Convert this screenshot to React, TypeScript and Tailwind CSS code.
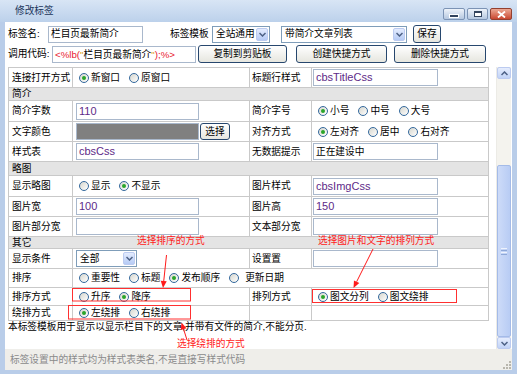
import React from 'react';

type Kids = { children?: React.ReactNode };

function Radio({ on }: { on?: boolean }) {
  return (
    <span className="flex h-[10px] w-[10px] shrink-0 items-center justify-center rounded-full border border-[#33689c] bg-linear-to-br from-[#d6d6ce] to-[#ffffff]">
      {on && <span className="h-[4px] w-[4px] rounded-full bg-[#2aa52a]" />}
    </span>
  );
}

function Opt({ on, label }: { on?: boolean; label: string }) {
  return (
    <span className="flex items-center gap-[2px] whitespace-nowrap">
      <Radio on={on} />
      <span>{label}</span>
    </span>
  );
}

function Chevron({ up }: { up?: boolean }) {
  return (
    <svg width="7" height="5" viewBox="0 0 7 5">
      <path d={up ? 'M0.5 4 L3.5 1 L6.5 4' : 'M0.5 1 L3.5 4 L6.5 1'} fill="none" stroke="#4d6185" strokeWidth="1.5" />
    </svg>
  );
}

function Field({ v, w, latin }: { v?: string; w: string; latin?: boolean }) {
  return (
    <div
      className={`flex h-[17px] shrink-0 items-center whitespace-nowrap border border-[#a9b8cc] bg-white pl-[2px] ${w} ${
        latin ? 'text-[11px] text-[#5e2a88]' : ''
      }`}
    >
      {v}
    </div>
  );
}

function Select({ v, w }: { v: string; w: string }) {
  return (
    <div className={`flex h-[17px] shrink-0 items-center border border-[#7f9db9] bg-white ${w}`}>
      <span className="flex-1 whitespace-nowrap pl-[3px]">{v}</span>
      <span className="mr-[1px] flex h-[13px] w-[12px] items-center justify-center rounded-[2px] border border-[#bccbf0] bg-linear-to-b from-[#e4ecfe] to-[#b6cbf5]">
        <Chevron />
      </span>
    </div>
  );
}

function Btn({ children, w, h = 'h-[18px]' }: Kids & { w: string; h?: string }) {
  return (
    <div
      className={`flex shrink-0 items-center justify-center whitespace-nowrap rounded-[3px] border border-[#27476e] bg-linear-to-b from-[#ffffff] to-[#e6e6df] ${w} ${h}`}
    >
      {children}
    </div>
  );
}

function Row({ h, children }: Kids & { h: string }) {
  return <div className={`flex border-b border-[#c9c9c9] ${h}`}>{children}</div>;
}

function Head({ h, children }: Kids & { h: string }) {
  return <div className={`flex items-center border-b border-[#c9c9c9] bg-[#e4e4e4] pl-[3px] ${h}`}>{children}</div>;
}

function C1({ children }: Kids) {
  return <div className="flex w-[64px] shrink-0 items-center whitespace-nowrap border-r border-[#c9c9c9] pl-[3px]">{children}</div>;
}
function C2({ children }: Kids) {
  return <div className="flex w-[177px] shrink-0 items-center border-r border-[#c9c9c9] pl-[3px]">{children}</div>;
}
function C3({ children }: Kids) {
  return <div className="flex w-[62px] shrink-0 items-center whitespace-nowrap border-r border-[#c9c9c9] pl-[2px]">{children}</div>;
}
function C4({ children }: Kids) {
  return <div className="flex w-[176px] shrink-0 items-center pl-[1px]">{children}</div>;
}

function Group({ children }: Kids) {
  return <div className="flex items-center gap-[9px] pl-[3px]">{children}</div>;
}
function Group4({ children }: Kids) {
  return <div className="flex items-center gap-[9px] pl-[5px]">{children}</div>;
}

function Arrow({ x1, y1, x2, y2 }: { x1: number; y1: number; x2: number; y2: number }) {
  const a = Math.atan2(y2 - y1, x2 - x1);
  const l = 7;
  const s = 3;
  const bx = x2 - l * Math.cos(a);
  const by = y2 - l * Math.sin(a);
  const p = `${x2},${y2} ${bx + s * Math.sin(a)},${by - s * Math.cos(a)} ${bx - s * Math.sin(a)},${by + s * Math.cos(a)}`;
  return (
    <g>
      <line x1={x1} y1={y1} x2={bx} y2={by} stroke="#ff1a1a" strokeWidth="1" />
      <polygon points={p} fill="#ff1a1a" />
    </g>
  );
}

export default function App() {
  return (
    <div className="relative flex h-[374px] w-[517px] flex-col overflow-hidden bg-[#b9cde9] font-['Liberation_Sans','Noto_Sans_CJK_SC',sans-serif] text-[9.7px] leading-none text-black">
      {/* title bar */}
      <div className="flex h-[22px] shrink-0 items-center bg-linear-to-b from-[#d8e5f5] to-[#bcd1eb]">
        <span className="ml-[15px] text-[#1b355b]">修改标签</span>
        <div className="ml-auto mr-[5px] mt-[8px] flex gap-[2px] self-start">
          <div className="flex h-[12px] w-[22px] items-center justify-center rounded-[2px] border border-[#7c93b4] bg-linear-to-b from-[#eef3fa] to-[#b6c8e0]">
            <span className="mt-[3px] h-[2px] w-[8px] bg-[#33445e] outline-1 outline-white" />
          </div>
          <div className="flex h-[12px] w-[21px] items-center justify-center rounded-[2px] border border-[#7c93b4] bg-linear-to-b from-[#eef3fa] to-[#b6c8e0]">
            <span className="h-[6px] w-[8px] border border-t-2 border-[#33445e] bg-white" />
          </div>
          <div className="flex h-[12px] w-[22px] items-center justify-center rounded-[2px] border border-[#93402f] bg-linear-to-b from-[#eba894] to-[#c8452f]">
            <svg width="9" height="7" viewBox="0 0 9 7">
              <path d="M1 0.5 L8 6.5 M8 0.5 L1 6.5" stroke="#ffffff" strokeWidth="1.8" />
            </svg>
          </div>
        </div>
      </div>

      {/* body */}
      <div className="mx-[5px] flex flex-1 flex-col bg-white">
        <div className="mt-[3px] flex h-[18px] items-center pl-[3px]">
          <span className="w-[40px] shrink-0 whitespace-nowrap">标签名:</span>
          <Field v="栏目页最新简介" w="w-[95px]" />
          <span className="ml-[27px] w-[42px] shrink-0 whitespace-nowrap">标签模板</span>
          <Select v="全站通用" w="w-[58px]" />
          <div className="ml-[11px]">
            <Select v="带简介文章列表" w="w-[126px]" />
          </div>
          <div className="ml-[6px]">
            <Btn w="w-[28px]">保存</Btn>
          </div>
        </div>

        <div className="mt-[2px] flex h-[18px] items-center pl-[3px]">
          <span className="w-[44px] shrink-0 whitespace-nowrap">调用代码:</span>
          <div className="h-[17px] w-[144px] shrink-0 overflow-hidden whitespace-nowrap border border-[#a9b8cc] bg-white pl-[2px] leading-[15px]">
            <span className="text-[#e8182e]">&lt;%lb(</span>
            <span className="text-[#e0a020]">"</span>
            <span>栏目页最新简介</span>
            <span className="text-[#e0a020]">"</span>
            <span className="text-[#e8182e]">);%&gt;</span>
          </div>
          <div className="ml-[2px]">
            <Btn w="w-[89px]">复制到剪贴板</Btn>
          </div>
          <div className="ml-[9px]">
            <Btn w="w-[91px]">创建快捷方式</Btn>
          </div>
          <div className="ml-[7px]">
            <Btn w="w-[92px]">删除快捷方式</Btn>
          </div>
        </div>

        {/* scroll area */}
        <div className="mt-[3px] flex h-[283px]">
          <div className="flex-1 overflow-hidden pl-[3px] pt-[1px]">
            <div className="w-[481px] border-x border-t border-[#c9c9c9]">
              <Row h="h-[20px]">
                <C1>连接打开方式</C1>
                <C2>
                  <Group>
                    <Opt on label="新窗口" />
                    <Opt label="原窗口" />
                  </Group>
                </C2>
                <C3>标题行样式</C3>
                <C4>
                  <Field v="cbsTitleCss" w="w-[125px]" latin />
                </C4>
              </Row>
              <Head h="h-[13px]">简介</Head>
              <Row h="h-[21px]">
                <C1>简介字数</C1>
                <C2>
                  <Field v="110" w="w-[123px]" latin />
                </C2>
                <C3>简介字号</C3>
                <C4>
                  <Group4>
                    <Opt on label="小号" />
                    <Opt label="中号" />
                    <Opt label="大号" />
                  </Group4>
                </C4>
              </Row>
              <Row h="h-[20px]">
                <C1>文字颜色</C1>
                <C2>
                  <div className="h-[17px] w-[123px] shrink-0 border border-[#a9b8cc] bg-[#808080]" />
                  <div className="ml-[1px]">
                    <Btn w="w-[30px]" h="h-[17px]">
                      选择
                    </Btn>
                  </div>
                </C2>
                <C3>对齐方式</C3>
                <C4>
                  <Group4>
                    <Opt on label="左对齐" />
                    <Opt label="居中" />
                    <Opt label="右对齐" />
                  </Group4>
                </C4>
              </Row>
              <Row h="h-[20px]">
                <C1>样式表</C1>
                <C2>
                  <Field v="cbsCss" w="w-[123px]" latin />
                </C2>
                <C3>无数据提示</C3>
                <C4>
                  <Field v="正在建设中" w="w-[125px]" />
                </C4>
              </Row>
              <Head h="h-[14px]">略图</Head>
              <Row h="h-[21px]">
                <C1>显示略图</C1>
                <C2>
                  <Group>
                    <Opt label="显示" />
                    <Opt on label="不显示" />
                  </Group>
                </C2>
                <C3>图片样式</C3>
                <C4>
                  <Field v="cbsImgCss" w="w-[125px]" latin />
                </C4>
              </Row>
              <Row h="h-[20px]">
                <C1>图片宽</C1>
                <C2>
                  <Field v="100" w="w-[123px]" latin />
                </C2>
                <C3>图片高</C3>
                <C4>
                  <Field v="150" w="w-[125px]" latin />
                </C4>
              </Row>
              <Row h="h-[20px]">
                <C1>图片部分宽</C1>
                <C2>
                  <Field w="w-[123px]" />
                </C2>
                <C3>文本部分宽</C3>
                <C4>
                  <Field w="w-[125px]" />
                </C4>
              </Row>
              <Head h="h-[12px]">其它</Head>
              <Row h="h-[20px]">
                <C1>显示条件</C1>
                <C2>
                  <Select v="全部" w="w-[61px]" />
                </C2>
                <C3>设置置</C3>
                <C4>
                  <Field w="w-[125px]" />
                </C4>
              </Row>
              <Row h="h-[19px]">
                <C1>排序</C1>
                <div className="flex flex-1 items-center pl-[3px]">
                  <Group>
                    <Opt label="重要性" />
                    <Opt label="标题" />
                    <Opt on label="发布顺序" />
                    <span className="flex items-center whitespace-nowrap">
                      <Radio />
                      <span className="ml-[6px]">更新日期</span>
                    </span>
                  </Group>
                </div>
              </Row>
              <Row h="h-[18px]">
                <C1>排序方式</C1>
                <C2>
                  <Group>
                    <Opt label="升序" />
                    <Opt on label="降序" />
                  </Group>
                </C2>
                <C3>排列方式</C3>
                <C4>
                  <Group4>
                    <Opt on label="图文分列" />
                    <Opt label="图文绕排" />
                  </Group4>
                </C4>
              </Row>
              <Row h="h-[15px]">
                <C1>绕排方式</C1>
                <C2>
                  <Group>
                    <Opt on label="左绕排" />
                    <Opt label="右绕排" />
                  </Group>
                </C2>
                <C3 />
                <C4 />
              </Row>
            </div>
            <div className="mt-[1px] whitespace-nowrap leading-[10px]">本标签模板用于显示以显示栏目下的文章,并带有文件的简介,不能分页.</div>
          </div>

          {/* scrollbar */}
          <div className="mr-[1px] mt-[1px] flex w-[15px] flex-col border-l border-[#ecebe6] bg-[#f4f3ee]">
            <div className="flex h-[12px] items-center justify-center rounded-[2px] border border-[#bccbf0] bg-linear-to-b from-[#e6edfd] to-[#c1d3f6]">
              <Chevron up />
            </div>
            <div className="h-[86px]" />
            <div className="flex h-[172px] items-center justify-center rounded-[2px] border border-[#a4bbe8] bg-linear-to-r from-[#cddbf8] to-[#b8ccf4]">
              <div className="flex flex-col gap-[1px]">
                <span className="h-[1px] w-[6px] bg-[#eef3fd]" />
                <span className="h-[1px] w-[6px] bg-[#8ea8d8]" />
                <span className="h-[1px] w-[6px] bg-[#eef3fd]" />
                <span className="h-[1px] w-[6px] bg-[#8ea8d8]" />
              </div>
            </div>
            <div className="flex h-[12px] items-center justify-center rounded-[2px] border border-[#bccbf0] bg-linear-to-b from-[#e6edfd] to-[#c1d3f6]">
              <Chevron />
            </div>
          </div>
        </div>

        {/* footer */}
        <div className="flex h-[21px] items-center bg-[#efeeea] pl-[5px] text-[#8a8a8a]">
          <span className="whitespace-nowrap">标签设置中的样式均为样式表类名,不是直接写样式代码</span>
          <svg className="ml-auto mr-[1px] self-end mb-[1px]" width="8" height="8" viewBox="0 0 8 8">
            <g fill="#b8b6ad">
              <rect x="6" y="0" width="2" height="2" />
              <rect x="3" y="3" width="2" height="2" />
              <rect x="6" y="3" width="2" height="2" />
              <rect x="0" y="6" width="2" height="2" />
              <rect x="3" y="6" width="2" height="2" />
              <rect x="6" y="6" width="2" height="2" />
            </g>
          </svg>
        </div>
      </div>
      <div className="h-[4px] shrink-0" />

      {/* annotations */}
      <span className="absolute left-[137px] top-[236px] whitespace-nowrap leading-[10px] text-[#ff1a1a]">选择排序的方式</span>
      <span className="absolute left-[318px] top-[236px] whitespace-nowrap leading-[10px] text-[#ff1a1a]">选择图片和文字的排列方式</span>
      <span className="absolute left-[177px] top-[339px] whitespace-nowrap leading-[10px] text-[#ff1a1a]">选择绕排的方式</span>
      <svg className="pointer-events-none absolute left-0 top-0" width="517" height="374" viewBox="0 0 517 374">
        <g fill="none" stroke="#ff3030" strokeWidth="1">
          <rect x="72.5" y="288.5" width="118" height="12.5" />
          <rect x="68.5" y="305.5" width="122" height="13.5" />
          <rect x="312.5" y="289.5" width="144" height="13" />
        </g>
        <Arrow x1={166.5} y1={255} x2={163} y2={288} />
        <Arrow x1={373} y1={249} x2={353.5} y2={288} />
        <Arrow x1={187} y1={340} x2={181.5} y2={322.5} />
      </svg>
    </div>
  );
}
